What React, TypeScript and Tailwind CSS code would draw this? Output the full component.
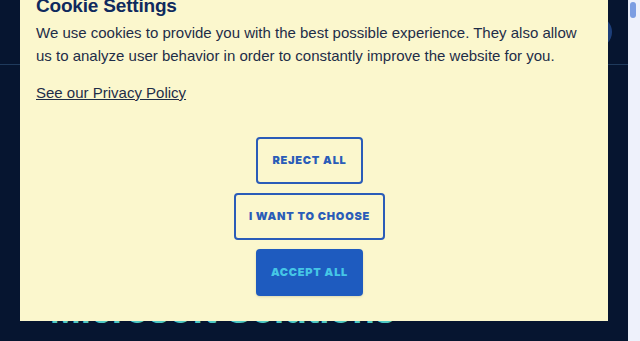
import React from 'react';

export default function App() {
  return (
    <div className="flex h-[341px] w-[640px] overflow-hidden bg-[#061530] font-['Liberation_Sans',sans-serif]">
      <div className="relative flex-1 overflow-hidden">
        <header className="flex h-[65px] items-center justify-end border-b border-[#1f3a5c] pr-4">
          <div className="h-[32px] w-[32px] rounded-full bg-[#1d3f7a]" />
        </header>
        <section className="px-[50px] pt-[226px]">
          <h1 className="text-[37px] font-black leading-[40px] text-[#4fc9c4] whitespace-nowrap">
            Microsoft Solutions
          </h1>
        </section>

        <div className="absolute left-[20px] top-[-25px] z-10 flex h-[346px] w-[588px] flex-col bg-[#fbf7cd] pl-4 pr-[25px] pt-[18px]">
          <h2 className="text-[19px] font-bold leading-[26px] tracking-[-0.01em] text-[#0f2a5e]">Cookie Settings</h2>
          <p className="mt-[2px] text-[15px] leading-[23px] text-[#1e2d48]">
            We use cookies to provide you with the best possible experience. They also allow us to
            analyze user behavior in order to constantly improve the website for you.
          </p>
          <a href="#" className="mt-[14px] self-start text-[15px] leading-[23px] text-[#1e2d48] underline">
            See our Privacy Policy
          </a>
          <div className="mt-[33px] flex flex-col items-center gap-[9px] font-['Inter',sans-serif]">
            <button className="h-[47px] w-[107px] rounded-[4px] border-2 border-[#2a5cb8] text-[11px] font-black tracking-[0.07em] text-[#2a5cb8]">
              REJECT ALL
            </button>
            <button className="h-[47px] w-[151px] rounded-[4px] border-2 border-[#2a5cb8] text-[11px] font-black tracking-[0.07em] text-[#2a5cb8]">
              I WANT TO CHOOSE
            </button>
            <button className="h-[47px] w-[107px] rounded-[4px] bg-[#1e5bbf] text-[11px] font-black tracking-[0.07em] text-[#45c6e6] shadow-sm">
              ACCEPT ALL
            </button>
          </div>
        </div>
      </div>
      <div className="w-[12px] bg-[#eef1fb] px-[2px] pt-[2px]">
        <div className="h-[16px] w-[6px] rounded-full bg-[#7c9de2]" />
      </div>
    </div>
  );
}
